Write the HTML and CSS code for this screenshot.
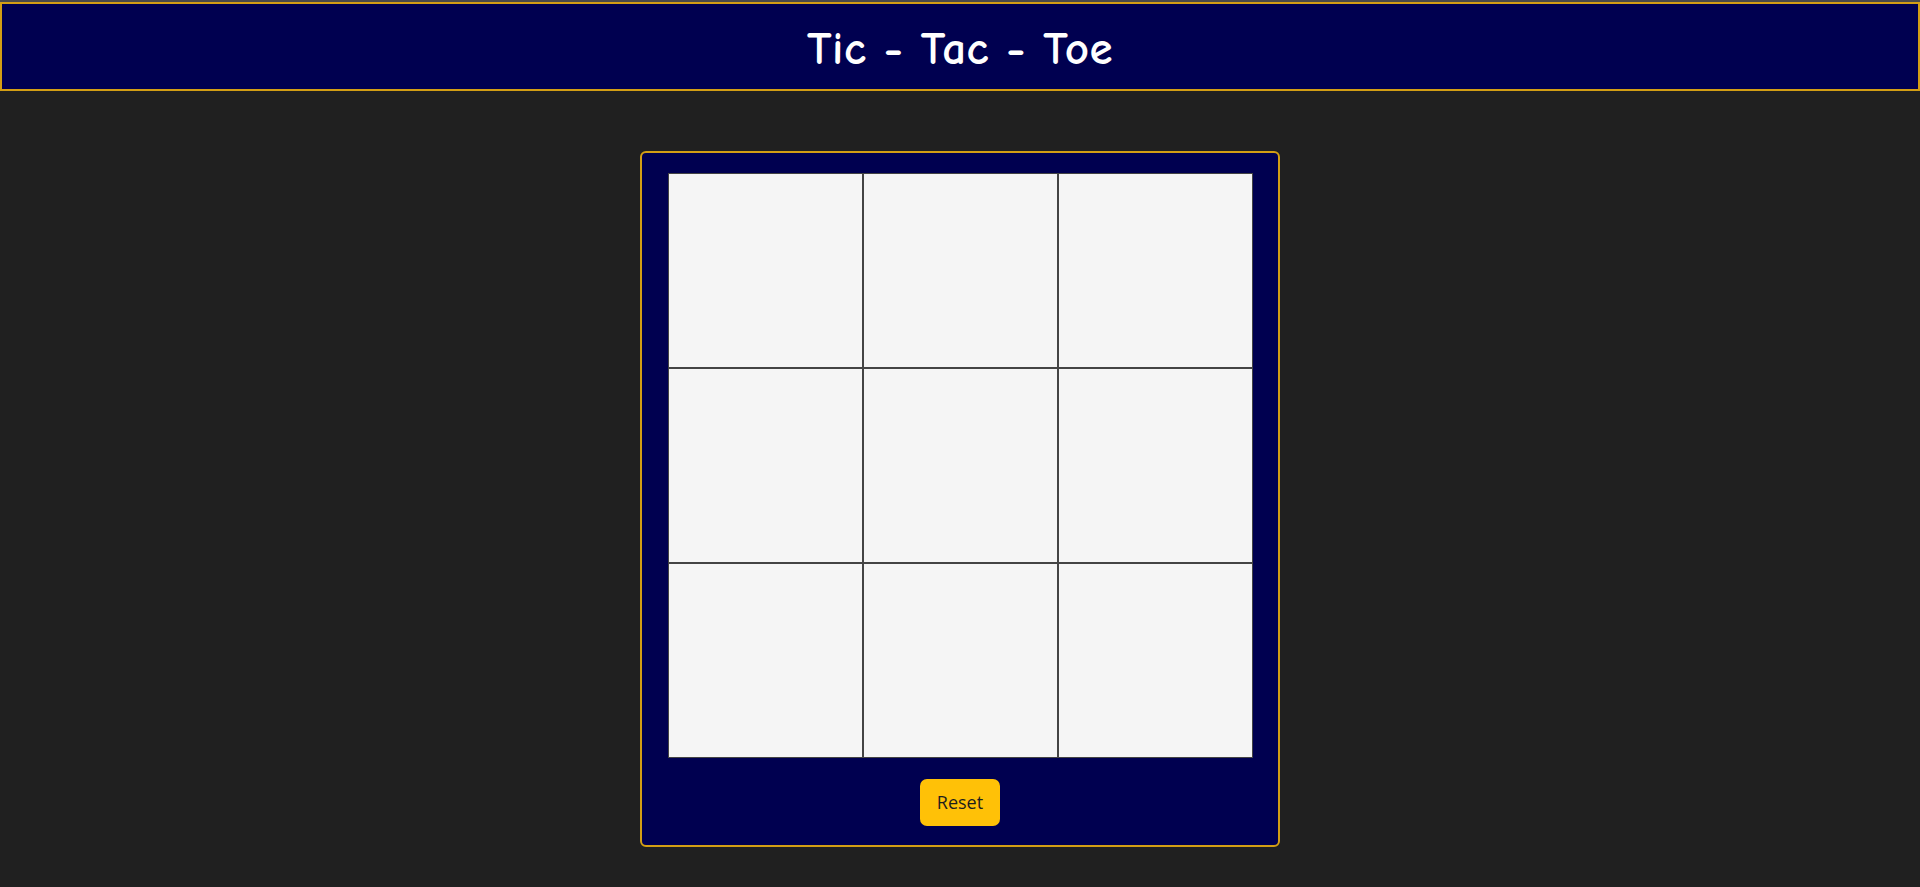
FILE: index.html
```html
<!DOCTYPE html>
<html lang="en">
<head>
<meta charset="utf-8">
<title>Tic - Tac - Toe</title>
<link rel="stylesheet" href="styles.css">
</head>
<body>
<div class="topline"></div>
<header class="header">
  <h1 class="title">Tic - Tac - Toe</h1>
</header>
<main class="main">
  <section class="game">
    <div class="board">
      <div class="cell"></div>
      <div class="cell"></div>
      <div class="cell"></div>
      <div class="cell"></div>
      <div class="cell"></div>
      <div class="cell"></div>
      <div class="cell"></div>
      <div class="cell"></div>
      <div class="cell"></div>
    </div>
    <button class="reset">Reset</button>
  </section>
</main>
</body>
</html>
```
FILE: styles.css
```css
* { box-sizing: border-box; }
html, body {
  margin: 0;
  padding: 0;
  background: #202020;
  height: 100%;
}
body {
  font-family: "Open Sans", "Noto Sans", sans-serif;
}
.topline {
  height: 2px;
  background: #4a4a4a;
}
.header {
  height: 89px;
  background: #000050;
  border: 2px solid #d39e14;
  display: flex;
  align-items: center;
  justify-content: center;
  padding-top: 6px;
}
.title {
  margin: 0;
  color: #ffffff;
  font-family: "Comic Sans MS", "Comic Neue", "DejaVu Sans", cursive;
  font-weight: bold;
  font-size: 47px;
  line-height: 1;
  letter-spacing: 0.5px;
}
.main {
  display: flex;
  justify-content: center;
  padding-top: 60px;
}
.game {
  width: 640px;
  height: 696px;
  background: #000050;
  border: 2px solid #d39e14;
  border-radius: 6px;
  padding-top: 20px;
  display: flex;
  flex-direction: column;
  align-items: center;
}
.board {
  display: grid;
  grid-template-columns: repeat(3, 195px);
  grid-template-rows: repeat(3, 195px);
}
.cell {
  background: #f5f5f5;
  border: 1px solid #444444;
}
.reset {
  margin-top: 21px;
  width: 80px;
  height: 47px;
  background: #ffc107;
  border: none;
  border-radius: 7px;
  color: #1e1e1e;
  font-family: "Open Sans", "Noto Sans", sans-serif;
  font-size: 18px;
  padding: 0 0 2px;
}
```
